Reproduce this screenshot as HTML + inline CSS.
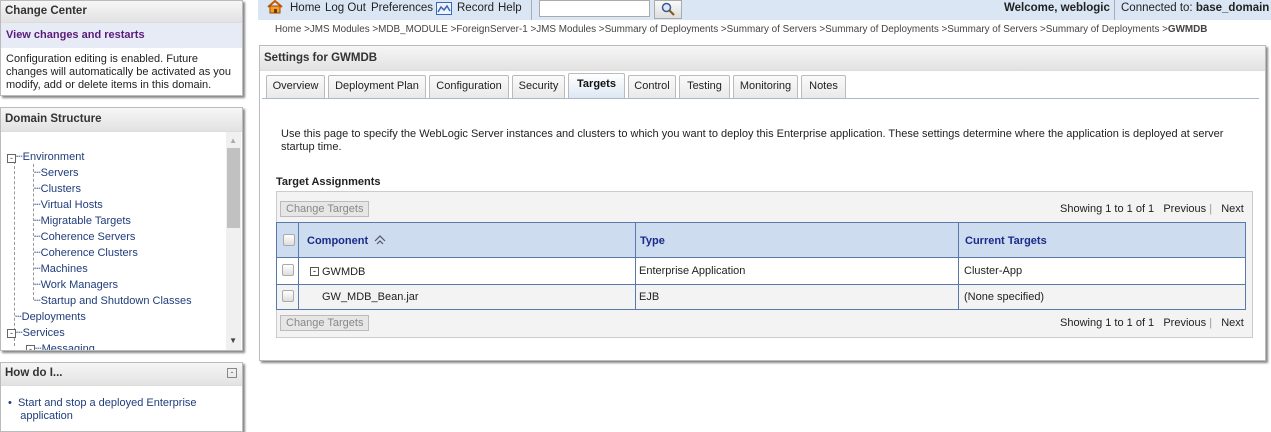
<!DOCTYPE html>
<html><head><meta charset="utf-8"><style>
*{box-sizing:border-box;margin:0;padding:0}
body{width:1271px;height:423px;overflow:hidden;background:#fff;font-family:"Liberation Sans",sans-serif;font-size:11px;color:#000;position:relative}
.a{position:absolute;white-space:nowrap}
.box{position:absolute;background:#fff;border:1px solid #bbb;box-shadow:2px 2px 2px #888}
.hd{position:absolute;left:0;right:0;top:0;background:linear-gradient(#f6f6f6,#e2e2e2);font-weight:bold;font-size:11.5px;color:#333;padding:4px 0 0 4px;border-bottom:1px solid #ddd}
.lk{color:#1f3d7a}
.tab{position:absolute;top:75px;height:23px;border:1px solid #bbb;border-bottom:none;background:linear-gradient(#fafafa,#e9e9e9);padding:4px 0 0;text-align:center;color:#222;border-radius:2px 2px 0 0}
.btn{position:absolute;border:1px solid #bbb;background:#e6e6e6;color:#888;padding:1px 5px;font-size:11px}
.cb{position:absolute;width:12px;height:12px;border:1px solid #aaa;border-radius:2px;background:linear-gradient(#fff,#ddd)}
.th{font-weight:bold;color:#1a2a8a}
.tb{position:absolute;top:2px;color:#222;font-size:11.5px;white-space:nowrap}
</style></head><body>
<div class="box" style="left:0;top:0;width:243px;height:96px">
<div class="hd" style="height:22px">Change Center</div>
<div class="a" style="left:0;top:22px;width:241px;height:25px;background:#e6ebf6;color:#5a1a7a;font-weight:bold;padding:6px 0 0 5px">View changes and restarts</div>
<div class="a" style="left:5px;top:52px;line-height:13px;color:#222;white-space:normal;width:235px">Configuration editing is enabled. Future changes will automatically be activated as you modify, add or delete items in this domain.</div>
</div>
<div class="box" style="left:0;top:107px;width:243px;height:244px;overflow:hidden">
<div class="hd" style="height:24px;padding-top:5px">Domain Structure</div>
<div class="a" style="right:1px;top:24px;width:15px;height:218px;background:#f0f0f0"></div>
<div class="a" style="right:2px;top:40px;width:13px;height:80px;background:#c1c1c1"></div>
<div class="a" style="right:5px;top:28px;color:#aaa;font-size:8px">▲</div>
<div class="a" style="right:5px;top:228px;color:#444;font-size:8px">▼</div>
<div class="a" style="left:13px;top:48px;height:190px;border-left:1px dashed #999"></div>
<div class="a" style="left:32px;top:56px;height:136px;border-left:1px dashed #999"></div>
<div class="a lk" style="left:6px;top:41px;line-height:16px">
<span style="display:inline-block;width:9px;height:9px;border:1px solid #666;background:#fff;font-size:9px;line-height:7px;text-align:center;vertical-align:-1px">-</span>┄Environment</div>
<div class="a lk" style="left:33px;top:57px;line-height:16px">┄Servers<br>┄Clusters<br>┄Virtual Hosts<br>┄Migratable Targets<br>┄Coherence Servers<br>┄Coherence Clusters<br>┄Machines<br>┄Work Managers<br>┄Startup and Shutdown Classes</div>
<div class="a lk" style="left:14px;top:201px;line-height:16px">┄Deployments</div>
<div class="a lk" style="left:6px;top:217px;line-height:16px"><span style="display:inline-block;width:9px;height:9px;border:1px solid #666;background:#fff;font-size:9px;line-height:7px;text-align:center">-</span>┄Services</div>
<div class="a lk" style="left:25px;top:233px;line-height:16px"><span style="display:inline-block;width:9px;height:9px;border:1px solid #666;background:#fff;font-size:9px;line-height:7px;text-align:center">-</span>┄Messaging</div>
</div>
<div class="box" style="left:0;top:362px;width:243px;height:70px">
<div class="hd" style="height:23px">How do I...</div>
<div class="a" style="right:5px;top:5px;width:10px;height:10px;border:1px solid #888;font-size:9px;line-height:7px;text-align:center;color:#555">-</div>
<div class="a lk" style="left:7px;top:34px;line-height:13px">•&nbsp; Start and stop a deployed Enterprise<br>&nbsp;&nbsp;&nbsp; application</div>
</div>
<div class="a" style="left:258px;top:0;width:1013px;height:20px;background:#dbe6f5"></div>
<svg class="a" style="left:267px;top:0" width="16" height="14" viewBox="0 0 16 14"><path d="M1 7 L8 1 L15 7" fill="none" stroke="#c65a00" stroke-width="2"/><rect x="3" y="6" width="10" height="7" fill="#f0a030" stroke="#a04800"/><rect x="7" y="9" width="3" height="4" fill="#7a3a00"/></svg>
<div class="tb" style="left:290px">Home</div>
<div class="tb" style="left:325px">Log Out</div>
<div class="tb" style="left:371px">Preferences</div>
<svg class="a" style="left:436px;top:2px" width="16" height="13" viewBox="0 0 16 13"><rect x="0.5" y="0.5" width="15" height="12" fill="#eef3ff" stroke="#3a66b8"/><path d="M2 10 L5 5 L8 8 L11 4 L14 9" fill="none" stroke="#3a66b8" stroke-width="1.5"/></svg>
<div class="tb" style="left:457px">Record</div>
<div class="tb" style="left:498px">Help</div>
<div class="a" style="left:531px;top:0;height:20px;border-left:1px solid #aab"></div>
<div class="a" style="left:539px;top:0;width:111px;height:17px;background:#fff;border:1px solid #aaa"></div>
<div class="a" style="left:654px;top:0;width:28px;height:19px;background:linear-gradient(#fafafa,#ddd);border:1px solid #aaa"></div>
<svg class="a" style="left:661px;top:2px" width="14" height="14" viewBox="0 0 14 14"><circle cx="5.5" cy="5.5" r="4" fill="#dde8f8" stroke="#3a5a90" stroke-width="1.5"/><path d="M8.5 8.5 L13 13" stroke="#8a5a20" stroke-width="2.2"/></svg>
<div class="a" style="left:1004px;top:2px;font-weight:bold;color:#222;font-size:11.5px">Welcome, weblogic</div>
<div class="a" style="left:1114px;top:0;height:20px;border-left:1px solid #aab"></div>
<div class="a" style="left:1121px;top:2px;color:#222;font-size:11.5px">Connected to: <b>base_domain</b></div>
<div class="a" style="left:275px;top:24px;color:#444;font-size:9.9px">Home &gt;JMS Modules &gt;MDB_MODULE &gt;ForeignServer-1 &gt;JMS Modules &gt;Summary of Deployments &gt;Summary of Servers &gt;Summary of Deployments &gt;Summary of Servers &gt;Summary of Deployments &gt;<b>GWMDB</b></div>
<div class="box" style="left:259px;top:45px;width:1007px;height:316px">
<div class="hd" style="height:25px;padding-top:6px">Settings for GWMDB</div>
</div>
<div class="tab" style="left:266px;width:59px">Overview</div>
<div class="tab" style="left:328px;width:98px">Deployment Plan</div>
<div class="tab" style="left:429px;width:80px">Configuration</div>
<div class="tab" style="left:512px;width:53px">Security</div>
<div class="tab" style="left:568px;width:57px;top:73px;height:25px;background:linear-gradient(#fff,#dde8f3);font-weight:bold;color:#111">Targets</div>
<div class="tab" style="left:628px;width:48px">Control</div>
<div class="tab" style="left:679px;width:51px">Testing</div>
<div class="tab" style="left:733px;width:65px">Monitoring</div>
<div class="tab" style="left:801px;width:45px">Notes</div>
<div class="a" style="left:262px;top:98px;width:997px;border-top:1px solid #aab8c8"></div>
<div class="a" style="left:281px;top:128px;color:#222;line-height:13px">Use this page to specify the WebLogic Server instances and clusters to which you want to deploy this Enterprise application. These settings determine where the application is deployed at server<br>startup time.</div>
<div class="a" style="left:276px;top:176px;font-weight:bold;color:#222">Target Assignments</div>
<div class="a" style="left:276px;top:191px;width:977px;height:147px;background:#f3f3f3;border:1px solid #ccc"></div>
<div class="btn" style="left:280px;top:201px">Change Targets</div>
<div class="btn" style="left:280px;top:315px">Change Targets</div>
<div class="a" style="left:1060px;top:203px;color:#222">Showing 1 to 1 of 1&nbsp;&nbsp; Previous <span style="color:#999">|</span>&nbsp;&nbsp; Next</div>
<div class="a" style="left:1060px;top:317px;color:#222">Showing 1 to 1 of 1&nbsp;&nbsp; Previous <span style="color:#999">|</span>&nbsp;&nbsp; Next</div>
<div class="a" style="left:276px;top:222px;width:970px;height:88px;border:1px solid #5a78a8;background:#fff"></div>
<div class="a" style="left:277px;top:223px;width:968px;height:35px;background:#cedcef;border-bottom:1px solid #5a78a8"></div>
<div class="a" style="left:277px;top:284px;width:968px;height:25px;background:#f3f3f3;border-top:1px solid #5a78a8"></div>
<div class="a" style="left:298px;top:223px;height:86px;border-left:1px solid #5a78a8"></div>
<div class="a" style="left:635px;top:223px;height:86px;border-left:1px solid #5a78a8"></div>
<div class="a" style="left:958px;top:223px;height:86px;border-left:1px solid #5a78a8"></div>
<div class="cb" style="left:283px;top:234px"></div>
<div class="cb" style="left:282px;top:264px"></div>
<div class="cb" style="left:282px;top:290px"></div>
<div class="a th" style="left:307px;top:235px">Component</div>
<svg class="a" style="left:374px;top:235px" width="12" height="10" viewBox="0 0 12 10"><path d="M1 6 L6 1 L11 6 M3 9 L6 6 L9 9" fill="none" stroke="#556" stroke-width="1.2"/></svg>
<div class="a th" style="left:640px;top:235px">Type</div>
<div class="a th" style="left:965px;top:235px">Current Targets</div>
<div class="a" style="left:310px;top:267px;width:9px;height:9px;border:1px solid #555;font-size:9px;line-height:6px;text-align:center">-</div>
<div class="a" style="left:322px;top:266px;color:#222">GWMDB</div>
<div class="a" style="left:639px;top:265px;color:#222">Enterprise Application</div>
<div class="a" style="left:964px;top:265px;color:#222">Cluster-App</div>
<div class="a" style="left:322px;top:291px;color:#222">GW_MDB_Bean.jar</div>
<div class="a" style="left:639px;top:291px;color:#222">EJB</div>
<div class="a" style="left:964px;top:291px;color:#222">(None specified)</div>
</body></html>
